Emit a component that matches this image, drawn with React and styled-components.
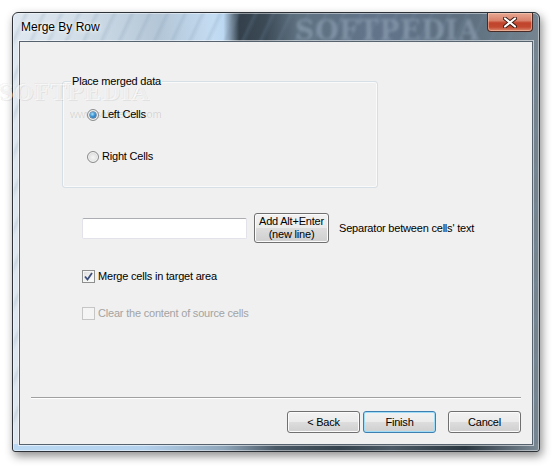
import styled, { createGlobalStyle } from "styled-components";

const GlobalStyle = createGlobalStyle`
	html, body {
		margin: 0;
		padding: 0;
		background: #ffffff;
	}
	#root {
		width: 560px;
		height: 472px;
	}
`;

const Page = styled.div`
	position: relative;
	width: 560px;
	height: 472px;
	padding: 12px 0 0 12px;
	box-sizing: border-box;
	overflow: hidden;
	font-family: "Liberation Sans", Arial, sans-serif;
	font-size: 11px;
	letter-spacing: -0.2px;
	color: #000;
`;

const Frame = styled.div`
	position: relative;
	display: flex;
	flex-direction: column;
	width: 528px;
	height: 440px;
	box-sizing: border-box;
	padding: 0 6px 6px 6px;
	border: 1px solid #2c3238;
	border-radius: 6px 6px 3px 3px;
	background:
		linear-gradient(90deg, #bcd9f4 0%, #b3d0ec 25%, #8fa6ba 40%, #4a5966 50%, #35434e 62%, #4b5a66 72%, #2b3740 86%, #5f6d79 95%, #7c8a95 100%) bottom / 100% 7px no-repeat,
		repeating-linear-gradient(115deg, rgba(255, 255, 255, 0) 0px, rgba(255, 255, 255, 0) 9px, rgba(120, 145, 170, 0.18) 12px, rgba(255, 255, 255, 0) 16px),
		linear-gradient(90deg, #dfe8f0 0%, #cfdce7 14%, #b3c6d7 28%, #c4dcf2 38%, #bcd8f2 40%, #34414c 43%, #3c4a56 48%, #5e7181 54%, #62748a 70%, #5d6f7f 86%, #75848f 100%);
	box-shadow:
		inset 0 0 0 1px rgba(255, 255, 255, 0.45),
		2px 4px 10px rgba(0, 0, 0, 0.45);
`;

const TitleBar = styled.div`
	position: relative;
	display: flex;
	justify-content: space-between;
	align-items: flex-start;
	height: 28px;
`;

const Title = styled.div`
	padding: 7px 0 0 2px;
	font-size: 12px;
	letter-spacing: 0;
	color: #000;
	text-shadow: 0 0 6px rgba(255, 255, 255, 0.9), 0 0 3px rgba(255, 255, 255, 0.9);
`;

const TitleMark = styled.div`
	position: absolute;
	left: 276px;
	top: 2px;
	font-family: "DejaVu Serif", serif;
	font-weight: 700;
	font-size: 27px;
	letter-spacing: 0.5px;
	color: rgba(150, 168, 186, 0.55);
	filter: blur(1.4px);
	pointer-events: none;
`;

const CloseButton = styled.div`
	display: flex;
	justify-content: center;
	align-items: center;
	width: 46px;
	height: 19px;
	box-sizing: border-box;
	border: 1px solid #4a2a24;
	border-top: none;
	border-radius: 0 0 4px 4px;
	background: linear-gradient(180deg, #e7a893 0%, #d9826b 42%, #c1432b 55%, #c24a31 78%, #dc8a6f 100%);
	box-shadow: inset 0 0 0 1px rgba(255, 220, 200, 0.45);
`;

const Client = styled.div`
	display: flex;
	flex-direction: column;
	flex: 1;
	background: #f0f0f0;
	border: 1px solid #56626d;
	box-shadow: 0 0 0 1px rgba(255, 255, 255, 0.55);
`;

const Content = styled.div`
	display: flex;
	flex-direction: column;
	flex: 1;
	padding: 39px 0 0 42px;
`;

const GroupBox = styled.div`
	display: flex;
	flex-direction: column;
	width: 316px;
	height: 107px;
	box-sizing: border-box;
	padding-left: 8px;
	border: 1px solid #d5dfe5;
	border-radius: 3px;
	box-shadow: inset 0 0 0 1px #fafafa;
`;

const Legend = styled.div`
	position: relative;
	z-index: 1;
	align-self: flex-start;
	margin-top: -7px;
	padding: 0 1px;
	line-height: 13px;
	background: #f0f0f0;
`;

const RadioList = styled.div`
	display: flex;
	flex-direction: column;
	gap: 29px;
	margin: 20px 0 0 16px;
`;

const Option = styled.label`
	position: relative;
	z-index: 1;
	display: flex;
	align-items: center;
	gap: 3px;
	height: 13px;
	line-height: 13px;
	color: ${({ $disabled }) => ($disabled ? "#a3a3a3" : "#000")};
`;

const RadioMark = styled.span`
	position: relative;
	width: 12px;
	height: 12px;
	box-sizing: border-box;
	border-radius: 50%;
	border: 1px solid #8a8c8e;
	background: radial-gradient(circle at 50% 55%, #f6f6f6 0%, #e6e6e6 45%, #cfcfcf 75%, #dadada 100%);
	box-shadow: inset 0 0 0 1px #f4f4f4;

	&::after {
		content: "";
		display: ${({ $checked }) => ($checked ? "block" : "none")};
		position: absolute;
		left: 2px;
		top: 2px;
		width: 6px;
		height: 6px;
		border-radius: 50%;
		background: radial-gradient(circle at 40% 35%, #a9e3fb 0%, #3d94d3 45%, #1b5a97 100%);
		box-shadow: 0 0 0 0.5px #1d4f7f;
	}
`;

const CheckMark = styled.span`
	display: flex;
	justify-content: center;
	align-items: center;
	width: 13px;
	height: 13px;
	box-sizing: border-box;
	border: 1px solid ${({ $disabled }) => ($disabled ? "#c6c6c6" : "#8e8f8f")};
	background: ${({ $disabled }) =>
		$disabled ? "#f4f4f4" : "linear-gradient(135deg, #dcdcdc 0%, #f0f0f0 50%, #fdfdfd 100%)"};
	box-shadow: inset 0 0 0 1px ${({ $disabled }) => ($disabled ? "#f4f4f4" : "#f6f6f6")};
`;

const SeparatorRow = styled.div`
	display: flex;
	align-items: center;
	margin: 25px 0 0 20px;
	height: 30px;
`;

const TextBox = styled.div`
	width: 165px;
	height: 21px;
	box-sizing: border-box;
	margin-right: 7px;
	background: #fff;
	border: 1px solid #e2e3ea;
	border-top-color: #abadb3;
	border-radius: 2px;
`;

const Button = styled.div`
	display: flex;
	flex-direction: column;
	justify-content: center;
	align-items: center;
	width: ${({ $w }) => $w || 73}px;
	height: ${({ $h }) => $h || 22}px;
	box-sizing: border-box;
	line-height: 13px;
	text-align: center;
	border: 1px solid ${({ $default }) => ($default ? "#3c7fb1" : "#707070")};
	border-radius: 3px;
	background: linear-gradient(180deg, #f2f2f2 0%, #ebebeb 49%, #dddddd 51%, #cfcfcf 100%);
	box-shadow: inset 0 0 0 1px ${({ $default }) => ($default ? "#9fdcf8" : "#fbfbfb")};
`;

const Hint = styled.span`
	margin-left: 10px;
`;

const CheckList = styled.div`
	display: flex;
	flex-direction: column;
	gap: 24px;
	margin: 27px 0 0 20px;
`;

const Separator = styled.div`
	margin: 0 11px;
	height: 1px;
	background: #a0a0a0;
	border-bottom: 1px solid #ffffff;
`;

const Footer = styled.div`
	display: flex;
	justify-content: flex-end;
	gap: 3px;
	padding: 12px 11px 11px 0;
`;

const CancelWrap = styled.div`
	margin-left: 9px;
`;

const PageMark = styled.div`
	position: absolute;
	left: -2px;
	top: 79px;
	font-family: "DejaVu Serif", serif;
	font-weight: 700;
	font-size: 22px;
	letter-spacing: 0.5px;
	color: rgba(255, 255, 255, 0.55);
	text-shadow: 1px 1px 0 rgba(0, 0, 0, 0.07), -1px -1px 0 rgba(0, 0, 0, 0.04);
	pointer-events: none;
`;

const UrlMark = styled.div`
	position: absolute;
	left: 70px;
	top: 108px;
	font-size: 11px;
	color: rgba(0, 0, 0, 0.12);
	pointer-events: none;
`;

function CloseGlyph() {
	return (
		<svg width="14" height="11" viewBox="0 0 14 11">
			<path
				d="M2 1.5 L12 9.5 M12 1.5 L2 9.5"
				stroke="#3a1a12"
				strokeWidth="4"
				strokeLinecap="round"
			/>
			<path
				d="M2 1.5 L12 9.5 M12 1.5 L2 9.5"
				stroke="#ffffff"
				strokeWidth="2.2"
				strokeLinecap="round"
			/>
		</svg>
	);
}

function Tick() {
	return (
		<svg width="9" height="9" viewBox="0 0 9 9">
			<path d="M1 4.5 L3.5 7.5 L8 1" fill="none" stroke="#3d4f7d" strokeWidth="1.8" />
		</svg>
	);
}

export default function App() {
	return (
		<Page>
			<GlobalStyle />
			<Frame>
				<TitleBar>
					<Title>Merge By Row</Title>
					<TitleMark>SOFTPEDIA</TitleMark>
					<CloseButton>
						<CloseGlyph />
					</CloseButton>
				</TitleBar>
				<Client>
					<Content>
						<GroupBox>
							<Legend>Place merged data</Legend>
							<RadioList>
								<Option>
									<RadioMark $checked />
									Left Cells
								</Option>
								<Option>
									<RadioMark />
									Right Cells
								</Option>
							</RadioList>
						</GroupBox>
						<SeparatorRow>
							<TextBox />
							<Button $w={75} $h={30}>
								<span>Add Alt+Enter</span>
								<span>(new line)</span>
							</Button>
							<Hint>Separator between cells' text</Hint>
						</SeparatorRow>
						<CheckList>
							<Option>
								<CheckMark>
									<Tick />
								</CheckMark>
								Merge cells in target area
							</Option>
							<Option $disabled>
								<CheckMark $disabled />
								Clear the content of source cells
							</Option>
						</CheckList>
					</Content>
					<Separator />
					<Footer>
						<Button>&lt; Back</Button>
						<Button $default>Finish</Button>
						<CancelWrap>
							<Button>Cancel</Button>
						</CancelWrap>
					</Footer>
				</Client>
			</Frame>
			<PageMark>SOFTPEDIA</PageMark>
			<UrlMark>www.softpedia.com</UrlMark>
		</Page>
	);
}
